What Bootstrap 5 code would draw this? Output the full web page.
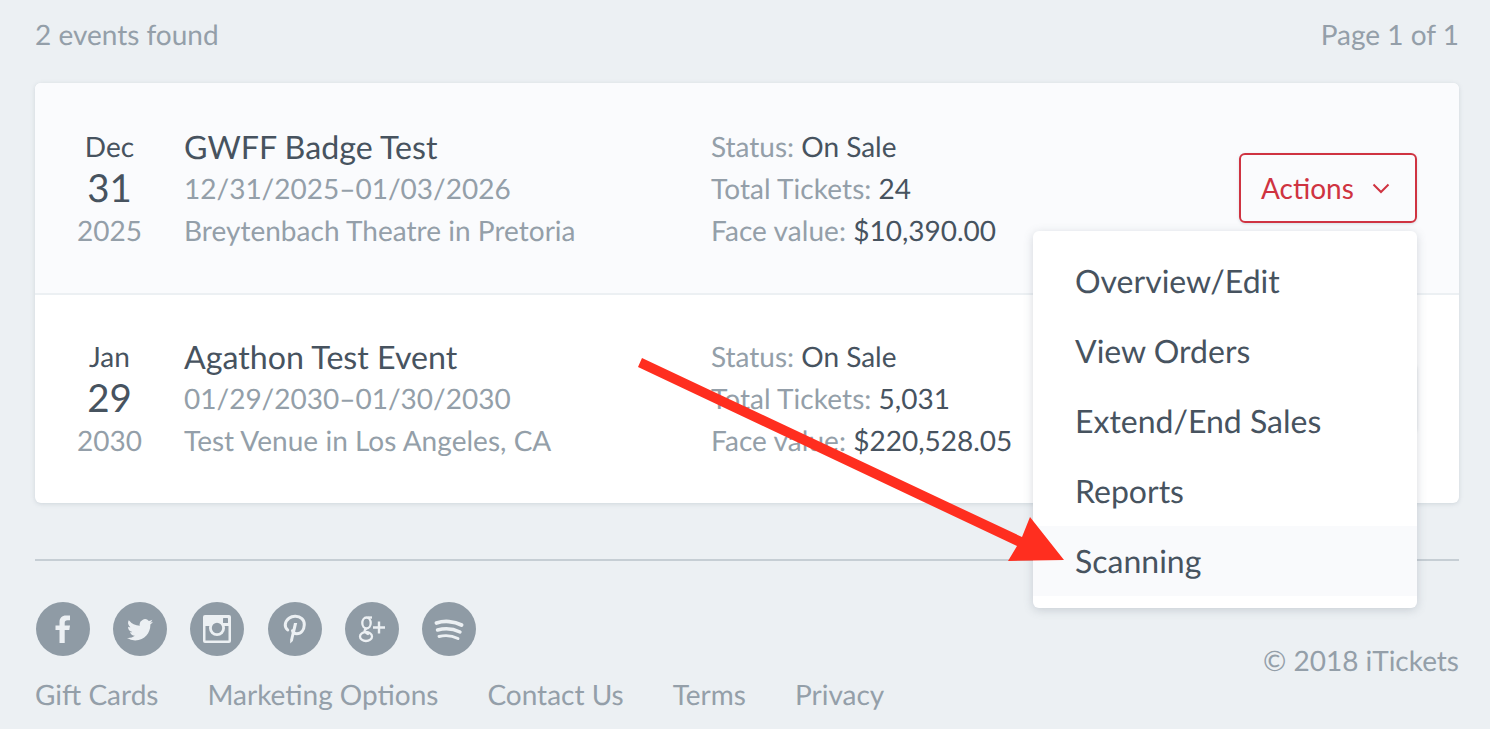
<!DOCTYPE html>
<html lang="en">
<head>
<meta charset="utf-8">
<title>Events</title>
<link href="https://cdn.jsdelivr.net/npm/bootstrap@5.3.0/dist/css/bootstrap.min.css" rel="stylesheet">
<style>
html,body{height:729px;overflow:hidden}
body{background:#ecf0f3;font-family:Lato,"Liberation Sans",sans-serif;font-size:28px;line-height:42px;color:#47535f;text-rendering:geometricPrecision}
.pg{position:relative;height:729px;padding:13px 31px 0 35px}
.muted-t{color:#949fa9}
.evcard{margin-top:28px;border:0;border-radius:6px;background:#fff;box-shadow:0 1px 4px rgba(120,135,150,.25);overflow:visible}
.evrow{padding:43px 42px 42px 42px;border-bottom:2px solid #ecf0f3;position:relative}
.evrow:last-child{border-bottom:0;padding:41px 42px 42px 42px}
.evrow.hov{background:#fafbfd;border-radius:6px 6px 0 0}
.datec{width:65px;text-align:center;margin-right:42px;flex:none}
.infoc>div:first-child{margin-bottom:-1px}
.datec>div:first-child,.statc>div:first-child{margin-top:-1px}
.dnum{font-size:38.500px}
.infoc{width:527px;flex:none}
.ttl{font-size:32.200px}
.venue{letter-spacing:.03px}
.statc{flex:1}
.statc .lbl{letter-spacing:.07px}
.act{align-self:flex-start;margin-top:27px;width:178px;height:70px;padding:0 0 0 20px;border:2px solid #cf3341;border-radius:6px;color:#cf3341;background:transparent;font-size:28px;line-height:1;display:flex;align-items:center;gap:18px;box-shadow:0 1px 3px rgba(120,135,150,.25)}
.act:hover{color:#cf3341;border-color:#cf3341}
.act svg{width:18px;height:11px}
.act.behind{border-color:#dde2e7}
.menu1{display:block;top:231px;left:1033px;width:384px;height:377px;padding:15px 0 0;margin:0;border:0;border-radius:6px;box-shadow:0 2px 10px rgba(90,105,120,.25);z-index:5}
.menu1 .dropdown-item{height:70px;padding:14px 42px;font-size:32px;line-height:42px;color:#47535f}
.menu1 .dropdown-item.on{background:#f9fafc}
.rule{margin:56px 0 0;border:0;border-top:2px solid #c6ced4;opacity:1}
.soc{gap:23.200px;margin:41px 0 0 1px}
.socb{width:54px;height:54px;border-radius:50%;background:#8f9ba5;display:flex;align-items:center;justify-content:center;flex:none}
.flinks{gap:49px;margin-top:17px}
.flinks a{color:#949fa9;text-decoration:none}
.copy{color:#949fa9;margin-top:78px}
.arrow{position:absolute;left:0;top:0;width:1490px;height:729px;z-index:10;pointer-events:none}
</style>
</head>
<body>
<div class="pg">
  <div class="d-flex justify-content-between muted-t"><span>2 events found</span><span>Page 1 of 1</span></div>
  <div class="card evcard">
    <div class="evrow hov d-flex">
      <div class="datec"><div>Dec</div><div class="dnum">31</div><div class="muted-t">2025</div></div>
      <div class="infoc"><div class="ttl">GWFF Badge Test</div><div class="muted-t">12/31/2025–01/03/2026</div><div class="muted-t venue">Breytenbach Theatre in Pretoria</div></div>
      <div class="statc"><div><span class="muted-t">Status:</span> On Sale</div><div><span class="muted-t lbl">Total Tickets:</span> 24</div><div><span class="muted-t lbl">Face value:</span> $10,390.00</div></div>
      <button class="btn act" type="button">Actions <svg viewBox="0 0 18 11"><path d="M1.500 1.500 9 9l7.500-7.500" fill="none" stroke="currentColor" stroke-width="2"/></svg></button>
    </div>
    <div class="evrow d-flex">
      <div class="datec"><div>Jan</div><div class="dnum">29</div><div class="muted-t">2030</div></div>
      <div class="infoc"><div class="ttl">Agathon Test Event</div><div class="muted-t">01/29/2030–01/30/2030</div><div class="muted-t venue">Test Venue in Los Angeles, CA</div></div>
      <div class="statc"><div><span class="muted-t">Status:</span> On Sale</div><div><span class="muted-t lbl">Total Tickets:</span> 5,031</div><div><span class="muted-t lbl">Face value:</span> $220,528.05</div></div>
      <button class="btn act behind" type="button" aria-label="Actions"></button>
    </div>
  </div>
  <hr class="rule">
  <div class="d-flex justify-content-between">
    <div>
      <div class="d-flex soc">
        <a class="socb" href="#"><svg width="18" height="28" viewBox="0 0 18 28"><path fill="#ecf0f3" d="M5.500 28V15H1.500v-4.500h4V7c0-4 2.500-6.500 6.500-6.500H16v4.800h-2.500C11.500 5.300 10.700 6.400 10.700 8v2.500H16l-.7 4.500h-4.600v13z"/></svg></a>
        <a class="socb" href="#"><svg width="26" height="26" viewBox="0 0 16 16"><path fill="#ecf0f3" d="M5.026 15c6.038 0 9.341-5.003 9.341-9.334q.002-.211-.006-.422A6.700 6.700 0 0 0 16 3.542a6.700 6.700 0 0 1-1.889.518 3.300 3.300 0 0 0 1.447-1.817 6.500 6.500 0 0 1-2.087.793A3.286 3.286 0 0 0 7.875 6.030a9.320 9.320 0 0 1-6.767-3.429 3.290 3.290 0 0 0 1.018 4.382A3.300 3.300 0 0 1 .64 6.575v.045a3.290 3.290 0 0 0 2.632 3.218 3.200 3.200 0 0 1-.865.115 3 3 0 0 1-.614-.057 3.280 3.280 0 0 0 3.067 2.277A6.600 6.600 0 0 1 .78 13.580a6 6 0 0 1-.78-.045A9.340 9.340 0 0 0 5.026 15"/></svg></a>
        <a class="socb" href="#"><svg width="28" height="28" viewBox="0 0 28 28"><rect x="0" y="0" width="28" height="28" rx="2" fill="#ecf0f3"/><rect x="2.500" y="11" width="23" height="14.500" fill="#8f9ba5"/><circle cx="14" cy="13" r="8" fill="#ecf0f3"/><circle cx="14" cy="13" r="5.200" fill="#8f9ba5"/><rect x="20" y="3" width="5" height="5" rx=".6" fill="#8f9ba5"/></svg></a>
        <a class="socb" href="#"><svg width="24" height="30" viewBox="0 0 24 30"><path fill="none" stroke="#ecf0f3" stroke-width="3" stroke-linecap="round" d="M4.700 16C2.500 14 2 12.300 2.300 10.300 3 5 8 2 12.500 2.200c5 .2 9 3.500 8.800 8.500-.2 5-3 9-7.500 9-2.500 0-4-1.500-4.300-3"/><path fill="#ecf0f3" d="M11 9h3.200L9.800 27l-2.600 2.500v-4z"/></svg></a>
        <a class="socb" href="#"><svg width="28" height="28" viewBox="0 0 28 28"><g fill="none" stroke="#ecf0f3" stroke-width="2.300"><ellipse cx="8.500" cy="8" rx="4.200" ry="5.500"/><ellipse cx="8" cy="21.500" rx="6" ry="4.500"/><path d="M8.500 13.500c-3 1.800-2 3 0 4.500 1 .8 2 1 2.500 1.500"/><path d="M9.500 2.500h4.500"/></g><path fill="#ecf0f3" d="M19.800 6.500h2.400v4.800H27v2.400h-4.800v4.800h-2.400v-4.800H15v-2.400h4.800z"/></svg></a>
        <a class="socb" href="#"><svg width="30" height="24" viewBox="0 0 30 24"><g fill="none" stroke="#ecf0f3" stroke-linecap="round"><path stroke-width="3.800" d="M2.500 6C10 3.500 20 4 27.500 8"/><path stroke-width="3.400" d="M3.500 13c7-2 15.500-1.500 22.500 2"/><path stroke-width="2.900" d="M5 19.500c6-1.500 13-1 19 2"/></g></svg></a>
      </div>
      <div class="d-flex flinks"><a href="#">Gift Cards</a><a href="#">Marketing Options</a><a href="#">Contact Us</a><a href="#">Terms</a><a href="#">Privacy</a></div>
    </div>
    <div class="copy">© 2018 iTickets</div>
  </div>
  <div class="dropdown-menu show menu1">
    <a class="dropdown-item" href="#">Overview/Edit</a>
    <a class="dropdown-item" href="#">View Orders</a>
    <a class="dropdown-item" href="#">Extend/End Sales</a>
    <a class="dropdown-item" href="#">Reports</a>
    <a class="dropdown-item on" href="#">Scanning</a>
  </div>
  <svg class="arrow" viewBox="0 0 1490 729"><path fill="#ff2e1f" d="M642 358 1022 537 1030 517 1064 560 1008 561 1017 546 638 367z"/></svg>
</div>
<script src="https://cdn.jsdelivr.net/npm/bootstrap@5.3.0/dist/js/bootstrap.bundle.min.js"></script>
</body>
</html>
